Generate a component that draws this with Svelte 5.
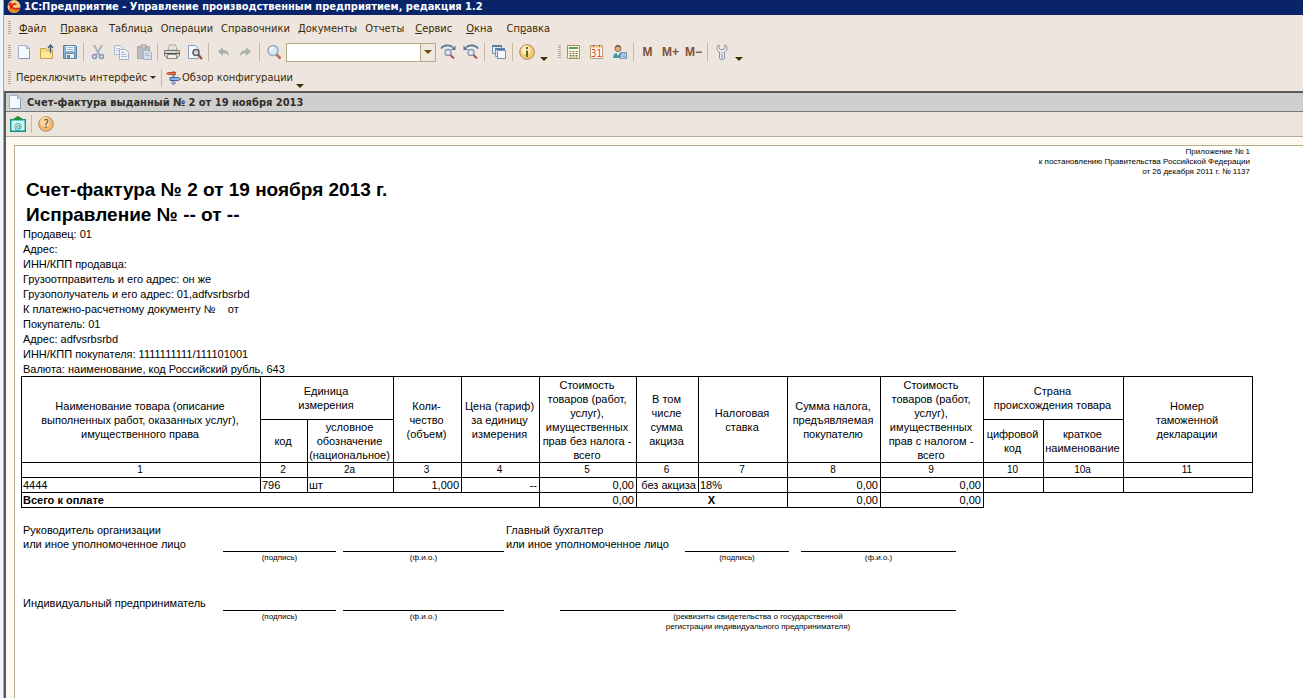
<script lang="ts">
  type MenuItem = { before: string; key: string; after: string };
  type Head = { text: string; cols?: number; rows?: number };

  const menu: MenuItem[] = [
    { before: "", key: "Ф", after: "айл" },
    { before: "", key: "П", after: "равка" },
    { before: "Таблица", key: "", after: "" },
    { before: "Операции", key: "", after: "" },
    { before: "Справочники", key: "", after: "" },
    { before: "", key: "Д", after: "окументы" },
    { before: "Отчеты", key: "", after: "" },
    { before: "", key: "С", after: "ервис" },
    { before: "", key: "О", after: "кна" },
    { before: "Сп", key: "р", after: "авка" },
  ];
  const wideMenu = [0, 1, 7, 8, 9];

  const leftTools = [
    ["Новый", "Открыть", "Сохранить"],
    ["Вырезать", "Копировать", "Вставить"],
    ["Печать", "Просмотр"],
    ["Отменить", "Вернуть"],
    ["Найти"],
  ];

  const details = [
    "Продавец: 01",
    "Адрес:",
    "ИНН/КПП продавца:",
    "Грузоотправитель и его адрес: он же",
    "Грузополучатель и его адрес: 01,adfvsrbsrbd",
    "К платежно-расчетному документу №    от",
    "Покупатель: 01",
    "Адрес: adfvsrbsrbd",
    "ИНН/КПП покупателя: 1111111111/111101001",
    "Валюта: наименование, код Российский рубль, 643",
  ];

  const columns = [239, 47, 86, 68, 78, 97, 62, 89, 93, 103, 60, 80, 129];
  const total = columns.reduce((sum, w) => sum + w, 0);

  const headTop: Head[] = [
    { text: "Наименование товара (описание\nвыполненных работ, оказанных услуг),\nимущественного права", rows: 2 },
    { text: "Единица\nизмерения", cols: 2 },
    { text: "Коли-\nчество\n(объем)", rows: 2 },
    { text: "Цена (тариф)\nза единицу\nизмерения", rows: 2 },
    { text: "Стоимость\nтоваров (работ,\nуслуг),\nимущественных\nправ без налога -\nвсего", rows: 2 },
    { text: "В том\nчисле\nсумма\nакциза", rows: 2 },
    { text: "Налоговая\nставка", rows: 2 },
    { text: "Сумма налога,\nпредъявляемая\nпокупателю", rows: 2 },
    { text: "Стоимость\nтоваров (работ,\nуслуг),\nимущественных\nправ с налогом -\nвсего", rows: 2 },
    { text: "Страна\nпроисхождения товара", cols: 2 },
    { text: "Номер\nтаможенной\nдекларации", rows: 2 },
  ];
  const headSub = ["код", "условное\nобозначение\n(национальное)", "цифровой\nкод", "краткое\nнаименование"];
  const numbers = ["1", "2", "2а", "3", "4", "5", "6", "7", "8", "9", "10", "10а", "11"];
  const row = ["4444", "796", "шт", "1,000", "--", "0,00", "без акциза", "18%", "0,00", "0,00", "", "", ""];
  const rightAligned = [3, 4, 5, 6, 8, 9];

  let search = $state("");
</script>

{#snippet sheetIcon()}
  <svg width="16" height="16" viewBox="0 0 16 16">
    <path d="M2.5 1.5h8l3 3v10h-11z" fill="#f4f9ff" stroke="#9fb2cc" />
    <path d="M10.500 1.500v3h3z" fill="#c9d8ec" stroke="#9fb2cc" />
    <path d="M4 14.500h9.500v-8" fill="none" stroke="#7f97b8" />
  </svg>
{/snippet}

{#snippet icon(name: string)}
  {#if name === "Новый"}
    {@render sheetIcon()}
  {:else}
    <svg width="16" height="16" viewBox="0 0 16 16">
      {#if name === "Открыть"}
        <path d="M1.500 4.500h5l1 1.500h6v8.500h-12z" fill="#f7dc7c" stroke="#c9a245" />
        <path d="M2 8h11v6H2z" fill="#fbe79b" />
        <path d="M11.500 9V2M9 4l2.500-3L14 4" fill="none" stroke="#4b5a6b" stroke-width="1.300" />
      {:else if name === "Сохранить"}
        <path d="M1.500 1.500h12l1 1v12h-13z" fill="#8db1d0" stroke="#55809f" />
        <path d="M4 2h8v5H4z" fill="#f4f8fc" />
        <path d="M5 3.500h6M5 5.500h6" stroke="#9fb6ca" />
        <path d="M3.500 9.500h9v5h-9z" fill="#e6edf3" stroke="#6488a5" />
        <path d="M5 11h3v3H5z" fill="#6f8ca6" />
      {:else if name === "Вырезать"}
        <path d="M4 1l5.500 10M12 1L6.500 11" stroke="#a9b4c4" stroke-width="2" />
        <circle cx="4.500" cy="12.500" r="2" fill="none" stroke="#7f93b4" stroke-width="1.500" />
        <circle cx="11.500" cy="12.500" r="2" fill="none" stroke="#7f93b4" stroke-width="1.500" />
      {:else if name === "Копировать"}
        <path d="M1.500 1.500h6l2 2v7h-8z" fill="#eef3f9" stroke="#a9b8cc" />
        <path d="M3 4.500h4M3 6.500h5" stroke="#b4c3d8" />
        <path d="M6.500 5.500h6l3 3v7h-9z" fill="#f2f6fb" stroke="#a1b2c9" />
        <path d="M8 8.500h4M8 10.500h6M8 12.500h6" stroke="#a9bbd3" />
      {:else if name === "Вставить"}
        <path d="M1.500 2.500h12v12h-12z" fill="#b9bcc2" stroke="#a3a7ae" />
        <path d="M5 1h5v3H5z" fill="#d8dade" stroke="#979ca5" />
        <path d="M7.500 6.500h5l3 2v7h-8z" fill="#d3dcea" stroke="#a3b1c6" />
        <path d="M9 9.500h4M9 11.500h5" stroke="#aab8cd" />
      {:else if name === "Печать"}
        <path d="M4 6l1.500-5h6L13 6z" fill="#fff" stroke="#9d9d9d" />
        <path d="M6 3h5M5.500 5h6" stroke="#c4c4c4" />
        <path d="M.5 6.500h15v5l-2 2h-11l-2-2z" fill="#d4d4d2" stroke="#7c7c7c" />
        <path d="M1 9.500h14" stroke="#4f4f4f" />
        <path d="M4 10.500h8l1 4H3z" fill="#f5f1dc" stroke="#888" />
        <path d="M12 8h2" stroke="#e0972f" />
      {:else if name === "Просмотр"}
        <path d="M1.500 1.500h7l3 3v10h-10z" fill="#f7fafd" stroke="#8ea0b8" />
        <circle cx="9" cy="8.500" r="3" fill="#c8dcea" stroke="#5d5d60" stroke-width="1.500" />
        <path d="M11.500 11l3.500 4" stroke="#8c4f33" stroke-width="2.200" />
      {:else if name === "Отменить"}
        <path d="M3 7.500l5-4.500v3c4 0 6 2 6 6-1.500-2-3-2.500-6-2.500V12z" fill="#a9aeb0" />
      {:else if name === "Вернуть"}
        <path d="M13 7.500L8 3v3c-4 0-6 2-6 6 1.500-2 3-2.500 6-2.500V12z" fill="#a9b5aa" />
      {:else if name === "Найти"}
        <circle cx="7" cy="6.500" r="5" fill="#d6eafa" stroke="#98a6bd" stroke-width="1.500" />
        <path d="M4.500 6a3 3 0 0 1 3-2.500" fill="none" stroke="#fff" stroke-width="1.500" />
        <path d="M10.500 10.500l4 4" stroke="#b2735d" stroke-width="2.500" />
      {:else if name === "Найти далее" || name === "Найти ранее"}
        {#if name === "Найти далее"}
          <path d="M1 4.500c3-4 9-4 12-1" fill="none" stroke="#56768f" stroke-width="1.600" />
          <path d="M15.500 1.500V6H11z" fill="#56768f" />
        {:else}
          <path d="M15 4.500c-3-4-9-4-12-1" fill="none" stroke="#56768f" stroke-width="1.600" />
          <path d="M.5 1.500V6H5z" fill="#56768f" />
        {/if}
        <circle cx="8" cy="8.500" r="3" fill="#dcebf8" stroke="#8a93ad" stroke-width="1.300" />
        <path d="M10.500 11l3.500 3.500" stroke="#b0563f" stroke-width="2" />
      {:else if name === "Окна"}
        <path d="M1.500 1.500h9v8h-9z" fill="#dce8f4" stroke="#7391b3" />
        <path d="M4.500 4.500h9v8h-9z" fill="#dce8f4" stroke="#7391b3" />
        <path d="M6.500 6.500h8v8h-8z" fill="#f5f9fd" stroke="#7391b3" />
        <path d="M1 2h10M4 5h10" stroke="#5b7fa8" stroke-width="2" />
      {:else if name === "Сведения"}
        <circle cx="8" cy="8" r="7.300" fill="#f6cd6c" stroke="#a78961" />
        <circle cx="7" cy="6" r="4.500" fill="#fdedb9" />
        <path d="M8 3v2M8 6.500V13" fill="none" stroke="#6a6527" stroke-width="2" />
      {:else if name === "Калькулятор"}
        <path d="M1.500 1.500h12v13h-12z" fill="#fdf8e6" stroke="#ad8a63" />
        <path d="M3 3h9v2H3z" fill="#55a24d" />
        <path d="M3.500 7.500h9M3.500 9.500h9M3.500 11.500h9M3.500 13h9" stroke="#80704c" stroke-dasharray="2 1" />
      {:else if name === "Календарь"}
        <path d="M1.500 1.500h12v13h-12z" fill="#fffaf3" stroke="#bd9a78" />
        <path d="M2 2h11v2H2z" fill="#f8d49c" />
        <path d="M4.500 1v2M10.500 1v2" stroke="#a15326" />
        <text x="7.500" y="13" text-anchor="middle" font-size="10" fill="#e3401d">31</text>
      {:else if name === "Пользователь"}
        <circle cx="6" cy="4.500" r="3" fill="#e8ae75" stroke="#8a6a4c" />
        <path d="M3 3.500c1-3 5-3 6 0l-3-1z" fill="#5d4a3c" />
        <path d="M1 14c0-7 10-7 10 0z" fill="#3f9aa5" />
        <path d="M4.500 8.500L6 12l1.500-3.500z" fill="#fff" />
        <path d="M8.500 8.500h6v6h-6z" fill="#cfdceb" stroke="#6f8fb3" />
        <path d="M10 9h3v2h-3zM10 12.500h3v2" fill="#fff" stroke="#7f9dbd" />
      {:else if name === "Настройка"}
        <path d="M5 .8C2 2.500 2 6.500 5.500 8v6c0 2 5 2 5 0V8C14 6.500 14 2.500 11 .8V4L9.500 5.500h-3L5 4z" fill="#e4e6ec" stroke="#8b92a1" />
        <path d="M8 8.500v4" stroke="#b3b8c3" stroke-width="1.500" />
        <circle cx="8" cy="13.300" r=".8" fill="#7c8394" />
      {:else if name === "Почта"}
        <path d="M0 5l8-5 8 5z" fill="#168a2c" />
        <path d="M.7 3.700h14.600v11.600H.7z" fill="#c9fbf7" stroke="#168f96" stroke-width="1.400" />
        <path d="M3 3.700L8 .5l5 3.200z" fill="#1d9235" />
        <text x="8" y="12.500" text-anchor="middle" font-size="9" fill="#108293">@</text>
      {:else if name === "Помощь"}
        <circle cx="8" cy="8" r="7.300" fill="#f4b66a" stroke="#b5895c" />
        <circle cx="7" cy="6" r="5" fill="#fbd8a2" />
        <text x="8" y="12" text-anchor="middle" font-size="12" fill="#6d4a24">?</text>
      {:else if name === "Обзор"}
        <path d="M7.500 1v14" stroke="#7b86a0" stroke-width="2" />
        <path d="M2.500 2.500h7v2h-7L.5 3.500z" fill="#ee7a55" stroke="#b04a30" />
        <path d="M4 7.500h8.500l2 1.500-2 1.500H4z" fill="#8fb4e8" stroke="#3e63a6" />
        <path d="M5 13h5" stroke="#9aa8c4" stroke-width="2" />
      {/if}
    </svg>
  {/if}
{/snippet}

{#snippet tool(name: string)}
  <button class="tool" type="button" aria-label={name}>{@render icon(name)}</button>
{/snippet}

{#snippet caret(label: string)}
  <button class="caret" type="button" aria-label={label}>
    <svg width="8" height="4" viewBox="0 0 8 4"><path d="M0 0h8L4 4z" fill="#3b3004" /></svg>
  </button>
{/snippet}

<div class="app">
  <header class="titlebar">
    <svg width="14" height="14" viewBox="0 0 14 14">
      <circle cx="7" cy="6.500" r="6.500" fill="#f8d27a" />
      <path d="M1 9a6.500 6.500 0 0 0 12 0z" fill="#e58b2b" />
      <path d="M1.500 5l2-1.500V9M9.500 4.500c-3-1.500-4.500 0-4.500 2S6.500 9 13 8.500" fill="none" stroke="#d5261c" stroke-width="1.800" />
    </svg>
    <span>1С:Предприятие - Управление производственным предприятием, редакция 1.2</span>
  </header>

  <nav class="bar menubar">
    <i class="grip"></i>
    {#each menu as item, i}
      <button class="menu" class:wide={wideMenu.includes(i)} type="button">{item.before}<u>{item.key}</u>{item.after}</button>
    {/each}
  </nav>

  <div class="bar toolbar">
    <i class="grip"></i>
    {#each leftTools as group, i}
      {#if i > 0}<i class="sep"></i>{/if}
      {#each group as name}{@render tool(name)}{/each}
    {/each}
    <div class="combo">
      <input type="text" aria-label="Строка поиска" bind:value={search} />
      <button type="button" aria-label="Список">
        <svg width="8" height="4" viewBox="0 0 8 4"><path d="M0 0h8L4 4z" fill="#6b4a12" /></svg>
      </button>
    </div>
    {@render tool("Найти далее")}
    {@render tool("Найти ранее")}
    <i class="sep"></i>
    {@render tool("Окна")}
    <i class="sep"></i>
    {@render tool("Сведения")}
    {@render caret("Еще")}
    <i class="grip second"></i>
    {@render tool("Калькулятор")}
    {@render tool("Календарь")}
    {@render tool("Пользователь")}
    <i class="sep"></i>
    <button class="tool memory" type="button">M</button>
    <button class="tool memory" type="button">M+</button>
    <button class="tool memory" type="button">M−</button>
    <i class="sep"></i>
    {@render tool("Настройка")}
    {@render caret("Дополнительно")}
  </div>

  <div class="bar switchbar">
    <i class="grip"></i>
    <button class="switch" type="button">
      Переключить интерфейс
      <svg width="6" height="3" viewBox="0 0 6 3"><path d="M0 0h6L3 3z" fill="#3b3004" /></svg>
    </button>
    <i class="sep"></i>
    <button class="overview" type="button">{@render icon("Обзор")}Обзор конфигурации</button>
    {@render caret("Другие команды")}
  </div>

  <section class="document">
    <h1 class="doc-title">{@render sheetIcon()}Счет-фактура выданный № 2 от 19 ноября 2013</h1>
    <div class="doc-tools">
      {@render tool("Почта")}
      <i class="sep"></i>
      {@render tool("Помощь")}
    </div>

    <div class="canvas">
      <article class="sheet">
        <p class="annex">
          Приложение № 1<br />
          к постановлению Правительства Российской Федерации<br />
          от 26 декабря 2011 г. № 1137
        </p>
        <h2>Счет-фактура № 2 от 19 ноября 2013 г.<br />Исправление № -- от --</h2>
        <div class="details">
          {#each details as line}
            <p>{line}</p>
          {/each}
        </div>

        <table>
          <colgroup>
            {#each columns as width}
              <col style="width: {(width / total) * 100}%" />
            {/each}
          </colgroup>
          <thead>
            <tr class="head">
              {#each headTop as cell}
                <th colspan={cell.cols ?? 1} rowspan={cell.rows ?? 1}>{cell.text}</th>
              {/each}
            </tr>
            <tr class="head">
              {#each headSub as text}
                <th>{text}</th>
              {/each}
            </tr>
            <tr class="numbers">
              {#each numbers as text}
                <th>{text}</th>
              {/each}
            </tr>
          </thead>
          <tbody>
            <tr>
              {#each row as text, i}
                <td class:right={rightAligned.includes(i)}>{text}</td>
              {/each}
            </tr>
            <tr>
              <td class="strong" colspan="5">Всего к оплате</td>
              <td class="right">0,00</td>
              <td class="strong center" colspan="2">X</td>
              <td class="right">0,00</td>
              <td class="right">0,00</td>
            </tr>
          </tbody>
        </table>

        <div class="signs officers">
          <p class="who">Руководитель организации<br />или иное уполномоченное лицо</p>
          <p class="line">(подпись)</p>
          <i></i>
          <p class="line">(ф.и.о.)</p>
          <p class="who">Главный бухгалтер<br />или иное уполномоченное лицо</p>
          <p class="line">(подпись)</p>
          <i></i>
          <p class="line">(ф.и.о.)</p>
        </div>
        <div class="signs owner">
          <p class="who">Индивидуальный предприниматель</p>
          <p class="line">(подпись)</p>
          <i></i>
          <p class="line">(ф.и.о.)</p>
          <i></i>
          <p class="line">(реквизиты свидетельства о государственной<br />регистрации индивидуального предпринимателя)</p>
        </div>
      </article>
    </div>
  </section>
</div>

<style>
  :global(body) {
    background: #eef6fb;
  }

  .app {
    display: flex;
    flex-direction: column;
    min-height: 100vh;
    margin-left: 3px;
    border-left: 1px solid #a3a9ae;
    background: #ede5de;
    color: #3b2a04;
    font-family: "DejaVu Sans Condensed", "DejaVu Sans", sans-serif;
    font-size: 11px;
    box-sizing: border-box;
  }

  h1,
  h2,
  p {
    margin: 0;
  }

  button {
    padding: 0;
    border: 0;
    background: none;
    color: inherit;
    font: inherit;
    white-space: nowrap;
  }

  svg {
    display: block;
    flex-shrink: 0;
  }

  .titlebar {
    display: flex;
    gap: 3px;
    height: 15px;
    padding-left: 3px;
    background: #0a246a;
    color: #fff;
    font-weight: bold;
    line-height: 13px;
    white-space: nowrap;
    overflow: hidden;
  }

  .bar {
    display: flex;
    align-items: center;
    height: 24px;
    padding-left: 4px;
  }

  .menubar {
    padding-top: 1px;
  }

  .switchbar {
    height: 27px;
  }

  .grip {
    width: 3px;
    height: 14px;
    margin-right: 1px;
    flex-shrink: 0;
    background: repeating-linear-gradient(#b3ab98 0 1px, transparent 1px 2px);
  }

  .grip.second {
    margin: 0 1px 0 8px;
  }

  .sep {
    width: 1px;
    height: 18px;
    margin: 0 2px;
    flex-shrink: 0;
    background: #c4baa2;
  }

  .menu {
    padding: 0 4px;
  }

  .menu.wide {
    padding: 0 7px;
  }

  .tool {
    display: flex;
    align-items: center;
    justify-content: center;
    width: 23px;
    height: 22px;
    flex-shrink: 0;
  }

  .memory {
    color: #7d5035;
    font-family: "Liberation Sans", Arial, sans-serif;
    font-size: 12px;
    font-weight: bold;
  }

  .caret {
    align-self: flex-end;
    padding: 0 2px 3px;
  }

  .combo {
    display: flex;
    width: 150px;
    height: 19px;
    margin-left: 1px;
    border: 1px solid #b5ab82;
    background: #fff;
    box-sizing: border-box;
  }

  .combo input {
    flex: 1;
    min-width: 0;
    padding: 0 3px;
    border: 0;
    outline: 0;
    background: none;
    font: inherit;
  }

  .combo button {
    display: flex;
    align-items: center;
    justify-content: center;
    width: 15px;
    border-left: 1px solid #b5ab82;
    background: #efe8dc;
  }

  .switch,
  .overview {
    display: flex;
    align-items: center;
    gap: 3px;
    padding: 0 3px 0 4px;
  }

  .overview {
    gap: 0;
    padding: 0 1px 0 2px;
  }

  .document {
    display: flex;
    flex: 1;
    flex-direction: column;
    border-top: 2px solid #5a5a5a;
    border-left: 2px solid #5a5a5a;
  }

  .doc-title {
    display: flex;
    align-items: center;
    gap: 4px;
    height: 18px;
    padding-left: 1px;
    border-bottom: 1px solid #777;
    background: #cfcfce;
    color: #302d2a;
    font-size: 11px;
    font-weight: bold;
  }

  .doc-tools {
    display: flex;
    align-items: center;
    height: 24px;
    border-bottom: 1px solid #b3aa9c;
    background: #ece5dc;
  }

  .canvas {
    display: flex;
    flex: 1;
    padding: 8px 0 0 8px;
    background: #fefaf3;
  }

  .sheet {
    flex: 1;
    padding: 1px 50px 20px 6px;
    border-top: 1px solid #b5ad86;
    border-left: 1px solid #b5ad86;
    background: #fff;
    color: #000;
    font-family: "Liberation Sans", Arial, sans-serif;
  }

  .annex {
    padding-right: 3px;
    font-size: 8px;
    line-height: 10px;
    text-align: right;
  }

  h2 {
    padding-left: 5px;
    font-size: 19px;
    line-height: 25px;
  }

  .details {
    margin-bottom: -1px;
    padding-left: 2px;
    line-height: 15px;
    white-space: pre;
  }

  table {
    width: 100%;
    border-collapse: collapse;
    table-layout: fixed;
  }

  th,
  td {
    height: 14px;
    padding: 0 2px 0 1px;
    border: 1px solid #000;
    line-height: 14px;
    text-align: left;
    white-space: nowrap;
  }

  th {
    padding: 0 2px 0 0;
    font-weight: normal;
    text-align: center;
    white-space: pre;
  }

  .head th {
    height: 42px;
  }

  .numbers th {
    font-size: 10px;
  }

  .right {
    text-align: right;
  }

  .center {
    text-align: center;
  }

  .strong {
    font-weight: bold;
  }

  .signs {
    display: grid;
    line-height: 14px;
  }

  .officers {
    grid-template-columns: 202fr 113fr 7fr 161fr 181fr 104fr 12fr 155fr 297fr;
    padding-top: 15px;
  }

  .owner {
    grid-template-columns: 202fr 113fr 7fr 161fr 56fr 396fr 297fr;
    padding-top: 20px;
  }

  .who {
    padding-left: 2px;
    white-space: nowrap;
  }

  .line {
    margin-top: 28px;
    padding-top: 1px;
    border-top: 1px solid #000;
    font-size: 8px;
    line-height: 10px;
    text-align: center;
  }

  .owner .line {
    margin-top: 27px;
  }

  .owner .who {
    padding-top: 13px;
  }
</style>
